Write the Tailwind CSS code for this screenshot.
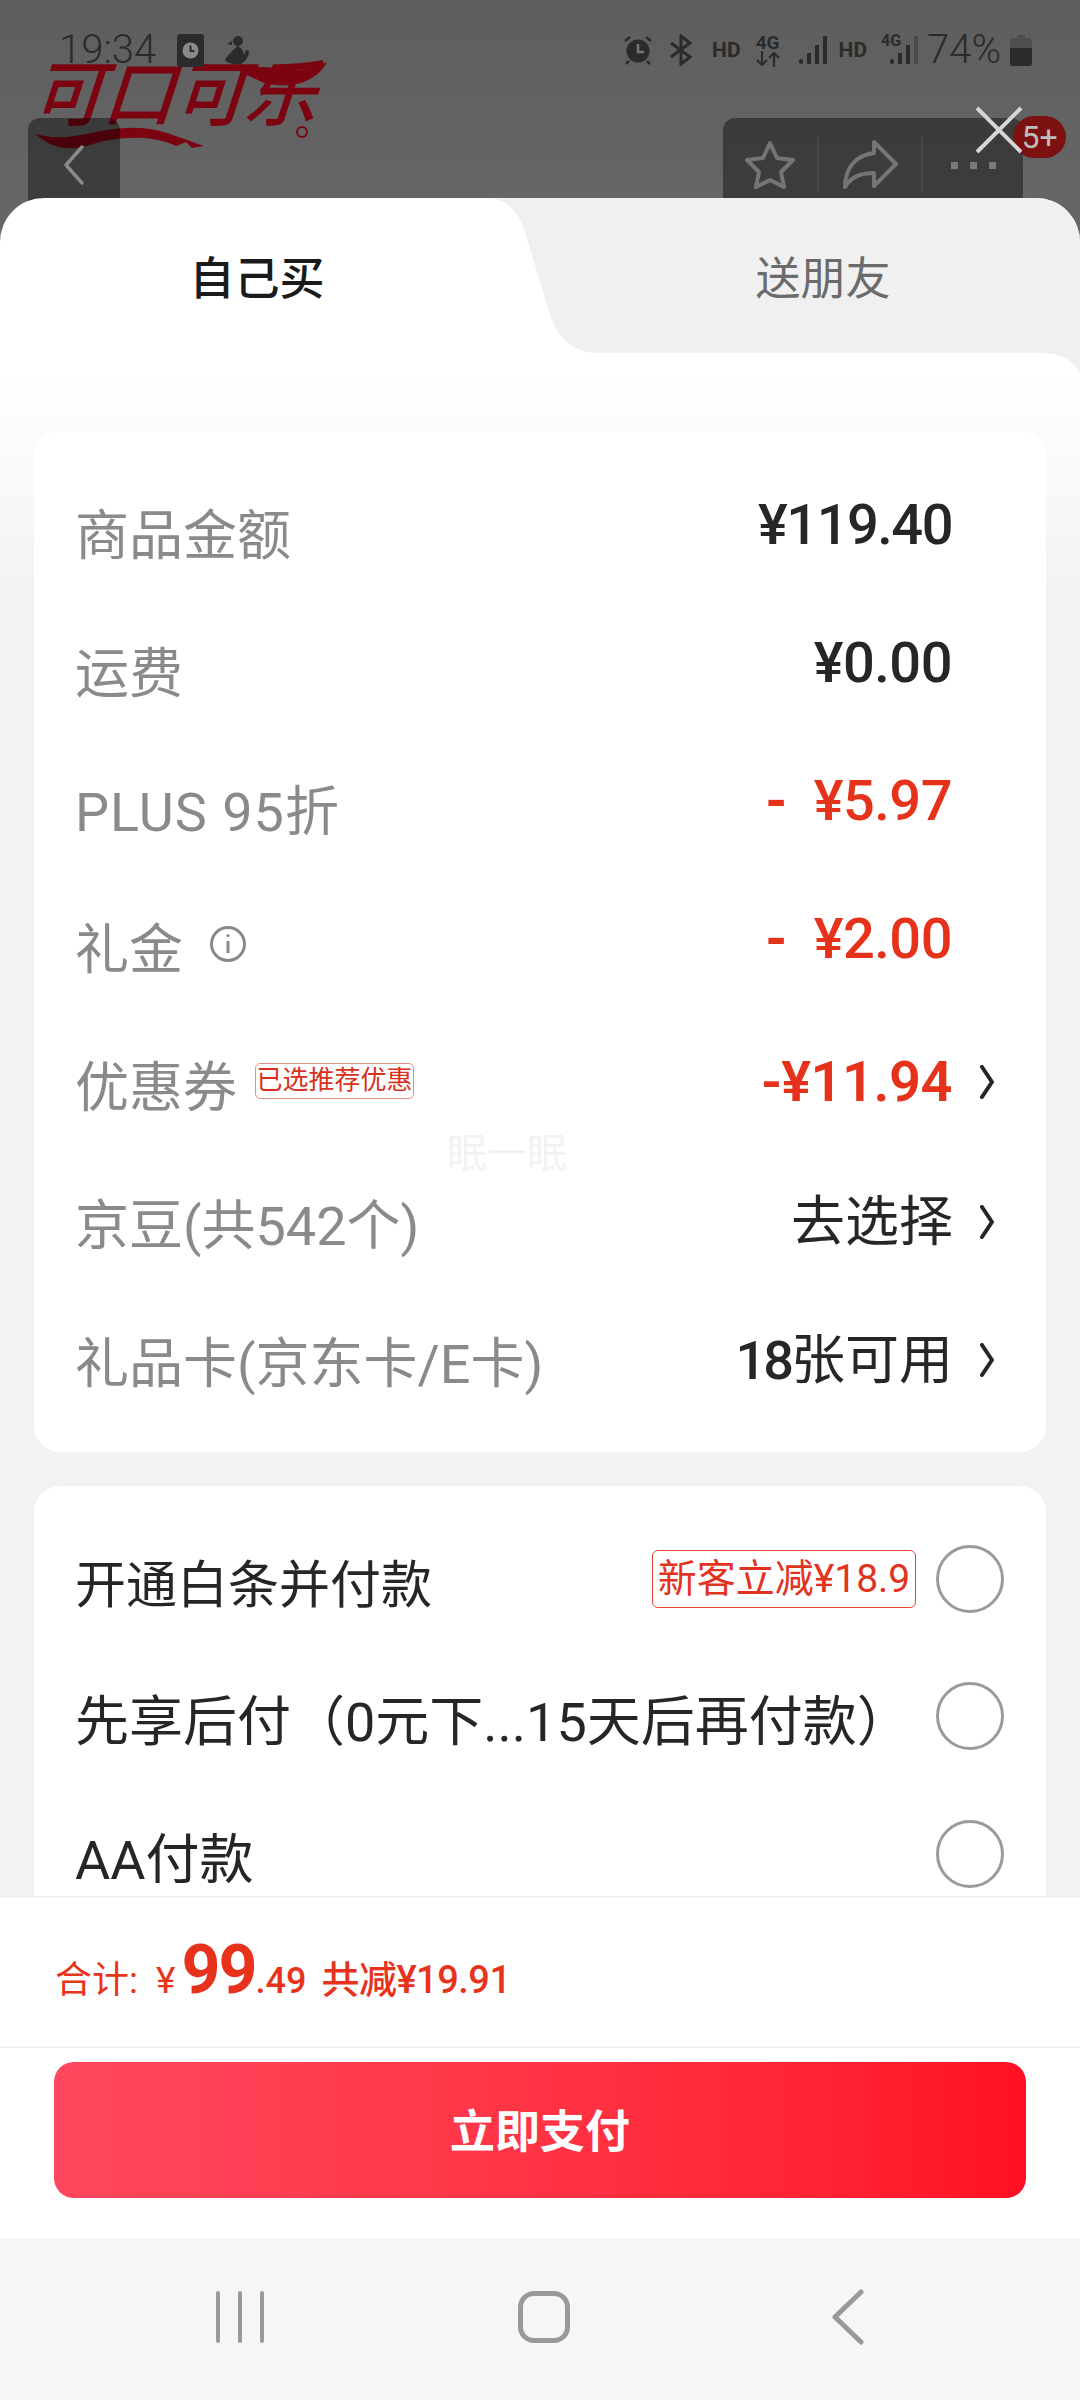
<!DOCTYPE html>
<html lang="zh-CN">
<head>
  <meta charset="UTF-8" />
  <title>立即支付</title>
  <script src="https://cdn.jsdelivr.net/npm/@tailwindcss/browser@4"></script>
</head>
<body class="bg-[#f6f6f6] font-['Roboto','Noto_Sans_CJK_SC',sans-serif]">
<div class="relative w-[1080px] h-[2400px] overflow-hidden flex flex-col">

  <!-- dimmed page behind the sheet -->
  <div class="relative h-[242px] -mb-[44px] shrink-0 bg-linear-to-b from-[#5e5e5e] to-[#676767] overflow-hidden">
    <!-- brand logo -->
    <div class="absolute left-[36px] top-[58px] w-[294px] h-[92px] text-[#7b0410]">
      <span class="absolute left-[2px] top-[-12px] text-[72px] leading-[100px] font-medium tracking-[-1px] whitespace-nowrap -skew-x-[18deg]">可口可乐</span>
      <svg class="absolute inset-0" width="294" height="92" viewBox="0 0 294 92" fill="#7b0410">
        <path d="M0 76 C40 88 70 62 120 72 C136 76 150 82 168 88 L156 90 L150 84 L140 88 C115 76 80 78 50 88 C30 94 12 88 0 76Z"/>
        <path d="M204 14 C234 0 254 22 291 4 C280 26 250 32 226 24 C218 20 212 18 204 14Z"/>
        <circle cx="266" cy="74" r="5" fill="none" stroke="#7b0410" stroke-width="2"/>
      </svg>
    </div>

    <!-- status bar -->
    <div class="relative h-[118px] pl-[59px] pr-[48px] pt-[34px] flex justify-between items-start text-[#2b2b2b]">
      <div class="flex items-center h-[32px]">
        <span class="text-[40px] leading-[32px] font-light">19:34</span>
        <svg class="ml-[21px]" width="27" height="33" viewBox="0 0 27 33"><rect width="27" height="33" rx="3" fill="#2b2b2b"/><circle cx="13.5" cy="16.5" r="8" fill="#8a8a8a"/><path d="M13.5 11.5v5.5h4" stroke="#2b2b2b" stroke-width="2" fill="none"/></svg>
        <svg class="ml-[20px]" width="26" height="30" viewBox="0 0 26 30" fill="#2b2b2b"><circle cx="14" cy="6" r="5"/><path d="M8 6 3 9l5 1zM13 11c-3 4-10 9-12 14 2 3 10 5 16 4 5-3 8-8 8-13l-3-1-2 5c-1-5-3-8-7-9z"/></svg>
      </div>
      <div class="flex items-center h-[32px]">
        <svg width="30" height="30" viewBox="0 0 30 30"><circle cx="15" cy="16" r="11.5" fill="#2b2b2b"/><path d="M15 9v8h6" stroke="#777" stroke-width="2.5" fill="none"/><path d="M2 6 7 2M28 6l-5-4M6 26l-3 3M24 26l3 3" stroke="#2b2b2b" stroke-width="2.5"/></svg>
        <svg class="ml-[15px]" width="27" height="32" viewBox="0 0 27 32" fill="none" stroke="#2b2b2b" stroke-width="3"><path d="M3 9 22 23 13 30V2l9 7L3 23"/></svg>
        <span class="ml-[17px] text-[21px] leading-[32px] font-bold">HD</span>
        <div class="ml-[14px] w-[26px] flex flex-col items-center">
          <span class="text-[19px] leading-[17px] font-bold">4G</span>
          <svg width="26" height="16" viewBox="0 0 26 16" fill="none" stroke="#2b2b2b" stroke-width="2.2"><path d="M7 0v14M2 9l5 5 5-5M19 16V2M14 7l5-5 5 5"/></svg>
        </div>
        <svg class="ml-[18px]" width="30" height="30" viewBox="0 0 30 30" fill="#2b2b2b"><rect x="0" y="24" width="4" height="5" rx="2"/><rect x="8" y="18" width="4" height="11"/><rect x="16" y="10" width="4" height="19"/><rect x="24" y="1" width="4" height="28"/></svg>
        <span class="ml-[10px] text-[21px] leading-[32px] font-bold">HD</span>
        <div class="relative ml-[14px] w-[38px] h-[32px]">
          <span class="absolute left-0 top-[-1px] text-[16px] leading-[16px] font-bold">4G</span>
          <svg class="absolute left-[9px] top-[1px]" width="30" height="30" viewBox="0 0 30 30" fill="#2b2b2b"><rect x="0" y="24" width="4" height="5" rx="2"/><rect x="8" y="18" width="4" height="11"/><rect x="16" y="10" width="4" height="19"/><rect x="24" y="1" width="4" height="28" fill="#4a4a4a"/></svg>
        </div>
        <span class="ml-[8px] text-[40px] leading-[32px] font-light">74%</span>
        <svg class="ml-[9px]" width="22" height="31" viewBox="0 0 22 31"><path d="M7 0h8v3h4a3 3 0 0 1 3 3v22a3 3 0 0 1-3 3H3a3 3 0 0 1-3-3V6a3 3 0 0 1 3-3h4z" fill="#4e4e4e"/><path d="M0 13h22v15a3 3 0 0 1-3 3H3a3 3 0 0 1-3-3z" fill="#2b2b2b"/></svg>
      </div>
    </div>

    <!-- page nav, cut off by the sheet -->
    <div class="relative pl-[28px] pr-[57px] flex justify-between">
      <div class="w-[92px] h-[124px] bg-black/40 rounded-t-[12px] flex justify-center pt-[27px]">
        <svg width="22" height="40" viewBox="0 0 22 40" fill="none" stroke="#8a8a8a" stroke-width="3.5" stroke-linecap="round" stroke-linejoin="round"><path d="M19 2 3 20l16 18"/></svg>
      </div>
      <div class="w-[300px] h-[124px] bg-black/40 rounded-t-[12px] flex">
        <div class="w-[94px] flex justify-center pt-[22px]">
          <svg width="50" height="50" viewBox="0 0 50 50" fill="none" stroke="#757575" stroke-width="4" stroke-linejoin="round"><path d="M25 3l7 15 16 2-12 12 3 15-14-7-14 7 3-15L2 20l16-2z"/></svg>
        </div>
        <div class="w-[2px] h-[56px] mt-[18px] bg-white/5"></div>
        <div class="w-[102px] flex justify-center pt-[22px]">
          <svg width="56" height="50" viewBox="0 0 56 50" fill="none" stroke="#757575" stroke-width="4" stroke-linejoin="round"><path d="M32 2l22 22-22 22V33C18 33 8 38 3 47c0-20 12-32 29-34z"/></svg>
        </div>
        <div class="w-[2px] h-[56px] mt-[18px] bg-white/5"></div>
        <div class="flex-1 flex justify-center gap-[12px] pt-[44px]">
          <span class="w-[7px] h-[7px] bg-[#7a7a7a]"></span>
          <span class="w-[7px] h-[7px] bg-[#7a7a7a]"></span>
          <span class="w-[7px] h-[7px] bg-[#7a7a7a]"></span>
        </div>
      </div>
    </div>

    <!-- message count and close button -->
    <span class="absolute left-[1013px] top-[116px] w-[53px] h-[42px] rounded-full bg-[#7c1111] text-[#bdbdbd] text-[32px] leading-[42px] text-center">5+</span>
    <svg class="absolute left-[975px] top-[106px]" width="48" height="48" viewBox="0 0 48 48" stroke="#d6d6d6" stroke-width="4"><path d="M2 2l44 44M46 2 2 46"/></svg>
  </div>

  <!-- tabs -->
  <div class="relative h-[175px] shrink-0 bg-white flex rounded-t-[44px] overflow-hidden">
    <svg class="absolute inset-0" width="1080" height="175" viewBox="0 0 1080 175">
      <path d="M485 0H1080V175C1074 166 1068 155 1040 155H600C572 155 556 140 548 110L528 44C520 14 508 0 485 0Z" fill="#f0f0f0"/>
    </svg>
    <div class="relative w-[514px] h-[156px] pt-[8px] flex items-center justify-center text-[45px] font-medium text-[#1a1a1a]">自己买</div>
    <div class="relative flex-1 h-[156px] pt-[8px] pl-[52px] flex items-center justify-center text-[45px] text-[#6b6b6b]">送朋友</div>
  </div>

  <!-- amounts and payment options -->
  <div class="flex-1 min-h-0 overflow-hidden px-[34px] pt-[58px] bg-[linear-gradient(#ffffff_0,#f2f2f2_230px)]">
    <div class="relative bg-white rounded-[26px] pt-[33px] pb-[22px] pl-[41px] pr-[50px] text-[54px] text-[#8a8a8a]">
      <div class="h-[138px] flex items-center justify-between">
        <span class="mt-[6px]">商品金额</span>
        <span class="mb-[16px] mr-[44px] text-[56px] font-medium text-[#262626] tracking-[-1.5px]">¥119.40</span>
      </div>
      <div class="h-[138px] flex items-center justify-between">
        <span class="mt-[6px]">运费</span>
        <span class="mb-[16px] mr-[44px] text-[56px] font-medium text-[#262626] tracking-[-0.5px]">¥0.00</span>
      </div>
      <div class="h-[138px] flex items-center justify-between">
        <span class="mt-[6px] tracking-[1px]">PLUS 95折</span>
        <span class="mb-[16px] mr-[44px] text-[56px] font-medium text-[#e6321a] tracking-[-0.5px] whitespace-pre"><span class="font-bold">-</span>  ¥5.97</span>
      </div>
      <div class="h-[138px] flex items-center justify-between">
        <div class="flex items-center">
          <span class="mt-[6px]">礼金</span>
          <svg class="ml-[26px] mb-[6px]" width="38" height="38" viewBox="0 0 38 38" fill="none" stroke="#8a8a8a" stroke-width="3"><circle cx="19" cy="19" r="16.5"/><path d="M19 16v12"/><circle cx="19" cy="10.5" r="1.5" fill="#8a8a8a" stroke="none"/></svg>
        </div>
        <span class="mb-[16px] mr-[44px] text-[56px] font-medium text-[#e6321a] tracking-[-0.5px] whitespace-pre"><span class="font-bold">-</span>  ¥2.00</span>
      </div>
      <div class="h-[138px] flex items-center justify-between">
        <div class="flex items-center">
          <span class="mt-[6px]">优惠券</span>
          <span class="ml-[18px] mb-[8px] h-[36px] w-[159px] border border-[#e58f7f] rounded-[5px] text-[26px] leading-[32px] text-center text-[#d9301c] whitespace-nowrap">已选推荐优惠</span>
        </div>
        <div class="flex items-center mb-[6px]">
          <span class="text-[56px] font-semibold text-[#e6321a] tracking-[-0.5px]">-¥11.94</span>
          <svg class="ml-[28px] mr-[2px]" width="14" height="34" viewBox="0 0 14 34" fill="none" stroke="#262626" stroke-width="4" stroke-linecap="round" stroke-linejoin="round"><path d="M2 2l10 15L2 32"/></svg>
        </div>
      </div>
      <div class="h-[138px] flex items-center justify-between">
        <span class="mt-[6px]">京豆(共542个)</span>
        <div class="flex items-center mb-[2px]">
          <span class="text-[#262626]">去选择</span>
          <svg class="ml-[27px] mr-[2px]" width="14" height="34" viewBox="0 0 14 34" fill="none" stroke="#262626" stroke-width="4" stroke-linecap="round" stroke-linejoin="round"><path d="M2 2l10 15L2 32"/></svg>
        </div>
      </div>
      <div class="h-[138px] flex items-center justify-between">
        <span class="mt-[6px]">礼品卡(京东卡/E卡)</span>
        <div class="flex items-center mb-[2px]">
          <span class="text-[#262626]"><span class="font-medium tracking-[-3px]">18</span>张可用</span>
          <svg class="ml-[27px] mr-[2px]" width="14" height="34" viewBox="0 0 14 34" fill="none" stroke="#262626" stroke-width="4" stroke-linecap="round" stroke-linejoin="round"><path d="M2 2l10 15L2 32"/></svg>
        </div>
      </div>
      <!-- floating assistant label -->
      <span class="absolute left-[413px] top-[699px] text-[40px] leading-[48px] text-[#f2f2f2]">眠一眠</span>
    </div>

    <div class="mt-[34px] bg-white rounded-[26px] pt-[24px] pl-[41px] pr-[42px] pb-[30px] text-[54px] text-[#262626]">
      <div class="h-[138px] flex items-center justify-between">
        <span class="mt-[14px] text-[51px]">开通白条并付款</span>
        <div class="flex items-center">
          <span class="w-[264px] h-[58px] border border-[#e0442e] rounded-[6px] text-[39px] leading-[56px] text-center text-[#e2331f] whitespace-nowrap">新客立减¥18.9</span>
          <span class="ml-[20px] w-[68px] h-[68px] rounded-full border-[3px] border-[#9a9a9a]"></span>
        </div>
      </div>
      <div class="h-[138px] flex items-center justify-between">
        <span class="mt-[10px] whitespace-nowrap">先享后付（0元下...15天后再付款）</span>
        <span class="-mt-[2px] w-[68px] h-[68px] rounded-full border-[3px] border-[#9a9a9a]"></span>
      </div>
      <div class="h-[138px] flex items-center justify-between">
        <span class="mt-[10px]">AA付款</span>
        <span class="-mt-[2px] w-[68px] h-[68px] rounded-full border-[3px] border-[#9a9a9a]"></span>
      </div>
    </div>
  </div>

  <!-- total -->
  <div class="h-[152px] shrink-0 bg-white border-t-2 border-b-2 border-[#f2f2f2] pl-[55px] flex items-baseline pt-[38px] text-[#e8331c] text-[37px]">
    <span>合计:</span>
    <span class="ml-[18px]">¥</span>
    <span class="ml-[6px] text-[68px] font-bold leading-[68px] tracking-[-2px]">99</span>
    <span class="text-[36px] font-medium">.49</span>
    <span class="ml-[15px] text-[38px] font-medium tracking-[-0.5px]">共减¥19.91</span>
  </div>

  <!-- pay button -->
  <div class="h-[190px] shrink-0 bg-white px-[54px] pt-[14px]">
    <button class="w-[972px] h-[136px] pt-[6px] rounded-[20px] bg-linear-to-r from-[#ff475d] to-[#ff0f23] text-white text-[45px] font-bold">立即支付</button>
  </div>

  <!-- android nav -->
  <div class="h-[162px] shrink-0 bg-[#f6f6f6] flex items-start pt-[53px] pl-[216px]">
    <div class="w-[48px] h-[52px] flex justify-between">
      <span class="w-[4px] h-full rounded-full bg-[#999999]"></span>
      <span class="w-[4px] h-full rounded-full bg-[#999999]"></span>
      <span class="w-[4px] h-full rounded-full bg-[#999999]"></span>
    </div>
    <div class="ml-[254px] w-[52px] h-[52px] rounded-[16px] border-[5px] border-[#999999]"></div>
    <svg class="ml-[262px] -mt-[2px]" width="32" height="56" viewBox="0 0 32 56" fill="none" stroke="#999999" stroke-width="5" stroke-linecap="round" stroke-linejoin="round"><path d="M29 3 3 28l26 25"/></svg>
  </div>
</div>
</body>
</html>
